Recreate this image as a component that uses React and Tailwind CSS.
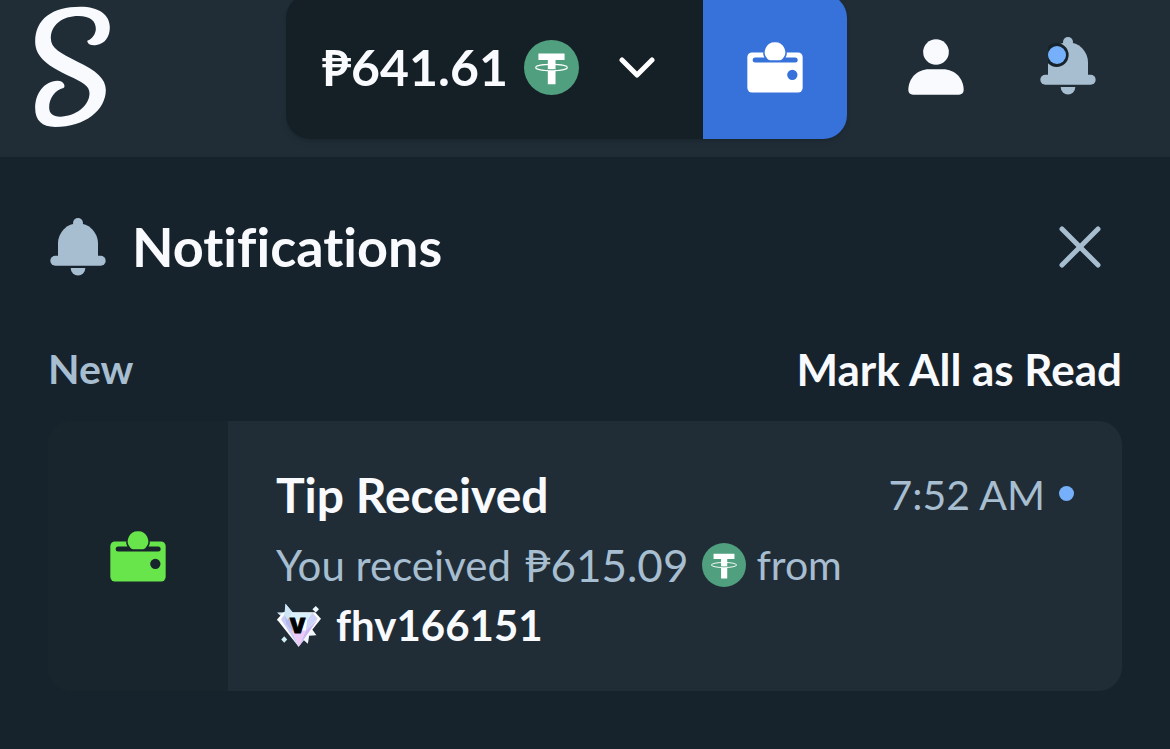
import { useState } from "react";

function StakeLogo() {
  return (
    <svg viewBox="102 18 230 366" className="w-[77px] h-[122px]" fill="#f8fafd">
      <path d="M262 126C265 134 275 137 289 135C314 132 329 111 329 82C329 44 296 20 240 20C156 20 105 57 105 125C105 172 148 200 205 227C248 247 268 257 268 280C268 318 225 350 180 350C158 350 147 341 147 322C147 295 165 270 190 264C198 258 190 242 172 242C131 244 105 280 105 325C105 361 125 381 165 381C255 381 317 330 317 270C317 236 288 211 232 185C180 159 152 145 152 115C152 75 186 48 235 48C270 48 287 63 287 86C287 105 272 118 264 121C261 122 261 124 262 126Z" />
    </svg>
  );
}

// "cut" is the colour of the surface behind the icon
function WalletIcon({ color, cut }) {
  return (
    <svg viewBox="0 0 168 152" className="w-14 h-[51px]" fill={color}>
      <rect x="1" y="31" width="166" height="120" rx="14" />
      <path
        d="M48 30a36 36 0 0 0 5 18h62a36 36 0 0 0 5-18z"
        fill={cut}
      />
      <rect x="17" y="46" width="135" height="15" rx="7.5" fill={cut} />
      <path d="M84 0a30 30 0 0 1 23 50q-3 4-8 4H69q-5 0-8-4A30 30 0 0 1 84 0z" />
      <circle cx="136" cy="98" r="15.5" fill={cut} />
    </svg>
  );
}

function BellIcon({ unread }) {
  return (
    <svg viewBox="0 0 168 174" className="w-14 h-[58px]" fill="#a7bdd0">
      <circle cx="84" cy="15" r="15" />
      <path d="M24 120V76a60 60 0 0 1 120 0v44z" />
      <rect x="1" y="113" width="166" height="30" rx="15" />
      <path d="M62 150h44a22 22.5 0 0 1-44 0z" />
      {unread && (
        <>
          <path d="M24 29A36 36 0 1 1 24 79z" fill="#17232c" />
          <circle cx="51" cy="54" r="27" fill="#76b0fb" />
        </>
      )}
    </svg>
  );
}

function UserIcon() {
  return (
    <svg viewBox="0 0 168 168" className="w-14 h-14" fill="#f8fafd">
      <circle cx="84" cy="39" r="38.5" />
      <path d="M63 91h42c36 0 62 28 62 62 0 9-6 14-14 14H15c-8 0-14-5-14-14 0-34 26-62 62-62z" />
    </svg>
  );
}

function TetherIcon({ className }) {
  return (
    <svg viewBox="0 0 164 164" className={className}>
      <circle cx="82" cy="82" r="82" fill="#509f7f" />
      <path d="M43 40h78v20H94v72H71V60H43z" fill="#fff" />
      <ellipse cx="82" cy="82" rx="47" ry="9.5" fill="none" stroke="#fff" strokeWidth="3.5" />
      <path d="M71 88q11 2 23 0" fill="none" stroke="#509f7f" strokeWidth="3" />
    </svg>
  );
}

function DiamondBadge() {
  return (
    <svg viewBox="10 8 138 134" className="w-[46px] h-[44px]">
      <path d="M38 10L60 36 30 70 34 58 12 62 26 50 12 37 36 36z" fill="#cfe6f6" />
      <path d="M92 120L106 132 110 108 132 106 116 84z" fill="#f3f7fd" />
      <path d="M32 36H128L146 56 78 141 12 58z" fill="#fff" />
      <path d="M38 38L24 58 78 141 58 92z" fill="#c9cdf6" />
      <path d="M38 38H120L104 60H54z" fill="#d9f0fa" />
      <path d="M36 42L56 60 62 98 40 72z" fill="#b3b9ee" />
      <path d="M38 10L58 36 44 60 34 44z" fill="#cfe6f6" />
      <path d="M120 38L136 56 100 92 104 60z" fill="#ccd2f8" />
      <path d="M58 92H100L78 141z" fill="#ecc9f7" />
      <path d="M100 92L136 58 78 141z" fill="#cbb8f3" />
      <path d="M130 17L140 27 130 37 120 27z" fill="#eefaff" />
      <path d="M34 109L43 119 34 129 25 119z" fill="#cfeff6" />
      <text
        x="75"
        y="98"
        textAnchor="middle"
        fontFamily="Inter, sans-serif"
        fontSize="62"
        fontWeight="900"
        stroke="#000"
        strokeWidth="3"
      >
        V
      </text>
    </svg>
  );
}

function Header() {
  return (
    <header className="flex h-[157px] items-start bg-[#202d37] pl-[34px] pr-[74px]">
      <a href="#home" aria-label="Home" className="mt-1.5">
        <StakeLogo />
      </a>

      {/* Balance + wallet */}
      <div className="-mt-1.5 ml-auto flex h-[145px] overflow-hidden rounded-3xl shadow-md">
        <button
          type="button"
          className="flex w-[417px] items-center bg-[#152026] pl-9 pr-12 pt-0.5 text-[50px] font-bold text-[#f8fafd]"
        >
          <span>₱641.61</span>
          <TetherIcon className="ml-4 h-[55px] w-[55px]" />
          <svg viewBox="0 0 36 22" className="ml-auto h-[22px] w-9" fill="none">
            <path d="M3 3l15 15L33 3" stroke="#fff" strokeWidth="5" strokeLinecap="round" strokeLinejoin="round" />
          </svg>
        </button>
        <button
          type="button"
          aria-label="Wallet"
          className="flex w-36 items-center justify-center bg-[#3672d9] pt-0.5"
        >
          <WalletIcon color="#fff" cut="#3672d9" />
        </button>
      </div>

      <button type="button" aria-label="Account" className="ml-[61px] mt-[39px]">
        <UserIcon />
      </button>
      <button type="button" aria-label="Notifications" className="ml-[76px] mt-[37px]">
        <BellIcon unread />
      </button>
    </header>
  );
}

function NotificationCard({ item, read }) {
  return (
    <article className="mt-[22px] flex overflow-hidden rounded-3xl bg-[#202d37]">
      <div className="flex w-[180px] shrink-0 items-center justify-center bg-[#18252d]">
        <WalletIcon color="#69e54c" cut="#18252d" />
      </div>
      <div className="flex-1 pb-9 pl-12 pr-12 pt-11">
        <div className="flex items-center justify-between">
          <h3 className="text-[48px] leading-[60px] font-bold text-[#f8fafd]">{item.title}</h3>
          <div className="flex items-center gap-3.5 text-[41px] leading-[60px] text-[#a7bdd0]">
            <time>{item.time}</time>
            {!read && <span className="mb-1 h-[15px] w-[15px] rounded-full bg-[#76b0fb]" />}
          </div>
        </div>
        <div className="mt-2.5 text-[42px] leading-[60px] text-[#a7bdd0]">
          <p className="flex items-center">
            <span className="mr-3.5">You received</span>
            <span className="text-[44px]">{item.amount}</span>
            <TetherIcon className="ml-3.5 mr-2.5 h-11 w-11" />
            <span className="text-[41px]">from</span>
          </p>
          <a href="#user" className="flex items-center gap-3.5 font-bold text-[#f8fafd]">
            <DiamondBadge />
            {item.from}
          </a>
        </div>
      </div>
    </article>
  );
}

const notifications = [
  { id: 1, title: "Tip Received", time: "7:52 AM", amount: "₱615.09", from: "fhv166151" },
];

export default function App() {
  const [read, setRead] = useState(false);

  return (
    <div className="min-h-screen bg-[#17232c] font-['Lato',sans-serif] [font-variant-ligatures:none]">
      <Header />
      <main className="px-12 pt-[60px]">
        <div className="flex items-center pl-0.5 pr-[21px]">
          <BellIcon />
          <h2 className="ml-[26px] text-[54px] leading-[60px] font-bold text-[#f8fafd]">
            Notifications
          </h2>
          <button type="button" aria-label="Close" className="ml-auto">
            <svg viewBox="0 0 42 42" className="h-[42px] w-[42px]" fill="none">
              <path d="M3 3l36 36M39 3L3 39" stroke="#a7bdd0" strokeWidth="5" strokeLinecap="round" />
            </svg>
          </button>
        </div>

        <div className="mt-[62px] flex items-center justify-between text-[41px] leading-[60px] font-bold">
          <span className="text-[#a7bdd0]">New</span>
          <button type="button" onClick={() => setRead(true)} className="text-[44px] text-[#f8fafd]">
            Mark All as Read
          </button>
        </div>

        {notifications.map((item) => (
          <NotificationCard key={item.id} item={item} read={read} />
        ))}
      </main>
    </div>
  );
}
